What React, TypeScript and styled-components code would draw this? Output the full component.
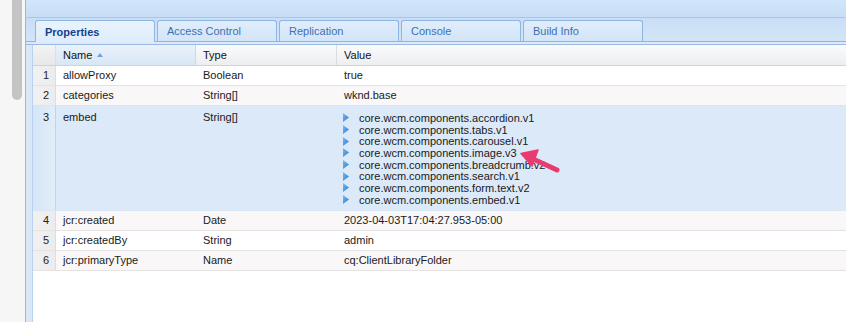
import React from "react";
import styled, { createGlobalStyle } from "styled-components";

const GlobalStyle = createGlobalStyle`
  html, body { margin: 0; padding: 0; background: #ffffff; overflow: hidden; }
  body { font-family: "Liberation Sans", Arial, sans-serif; font-size: 11px; color: #111; }
`;

const Page = styled.div`
  position: relative;
  display: flex;
  width: 846px;
  height: 322px;
  overflow: hidden;
`;

const Gutter = styled.div`
  width: 25px;
  flex: none;
  background: #f6f6f6;
  padding-left: 12px;
  box-sizing: border-box;
`;

const Thumb = styled.div`
  width: 10px;
  height: 100px;
  background: #c4c4c4;
  border-radius: 0 0 5px 5px;
`;

const Panel = styled.div`
  flex: 1;
  display: flex;
  flex-direction: column;
  border-left: 1px solid #95b8e4;
  min-width: 0;
`;

const TopBand = styled.div`
  height: 17px;
  flex: none;
  background: linear-gradient(#d2e6fa, #c6ddf5);
  border-bottom: 1px solid #a6c8ec;
`;

const TabStrip = styled.div`
  height: 23px;
  flex: none;
  display: flex;
  align-items: flex-end;
  gap: 2px;
  padding-left: 9px;
  background: linear-gradient(#c9def6, #d3e4f7);
  border-bottom: 1px solid #8db4e2;
`;

const Tab = styled.div<{ $active?: boolean }>`
  width: 120px;
  box-sizing: border-box;
  border: 1px solid #8fb5e2;
  border-bottom: none;
  border-radius: 3px 3px 0 0;
  padding-left: 9px;
  display: flex;
  align-items: center;
  font-size: 11px;
  background: ${(p) =>
    p.$active
      ? "linear-gradient(#e9f3fd, #deecfc)"
      : "linear-gradient(#e0edfc, #d3e5f8)"};
  color: ${(p) => (p.$active ? "#15428b" : "#3f6fae")};
  font-weight: ${(p) => (p.$active ? 700 : 400)};
  margin-bottom: ${(p) => (p.$active ? "-1px" : "0")};
  height: ${(p) => (p.$active ? "22px" : "21px")};
`;

const TabGap = styled.div`
  height: 2px;
  flex: none;
  background: #dde9f8;
  border-bottom: 1px solid #98bbe6;
`;

const Body = styled.div`
  flex: 1;
  display: flex;
  min-height: 0;
`;

const SideStrip = styled.div`
  width: 6px;
  flex: none;
  background: #d9e7f7;
  border-right: 1px solid #b9d1ee;
`;

const Grid = styled.div`
  flex: 1;
  background: #ffffff;
  min-width: 0;
`;

const cols = "23px 140px 141px 1fr";

const HeaderRow = styled.div`
  display: grid;
  grid-template-columns: ${cols};
  height: 20px;
  border-bottom: 1px solid #d9d0d0;
  background: linear-gradient(#fbfbfc, #eceef0);
`;

const HeadCell = styled.div<{ $sorted?: boolean; $num?: boolean }>`
  display: flex;
  align-items: center;
  padding-left: 7px;
  font-size: 11px;
  color: #111;
  border-right: 1px solid ${(p) => (p.$num ? "#dedede" : p.$sorted ? "#c9d8ea" : "#dcdcdc")};
  background: ${(p) =>
    p.$num
      ? "linear-gradient(#f3f3f3, #e8e8e8)"
      : p.$sorted
      ? "linear-gradient(#eaf2fb, #d8e7f6)"
      : "transparent"};
  &:last-child { border-right: none; }
`;

const SortArrow = styled.span`
  margin-left: 5px;
  width: 0;
  height: 0;
  border-left: 3.5px solid transparent;
  border-right: 3.5px solid transparent;
  border-bottom: 4px solid #6aa6dc;
`;

const Row = styled.div<{ $alt?: boolean; $selected?: boolean; $tall?: boolean }>`
  display: grid;
  grid-template-columns: ${cols};
  height: ${(p) => (p.$tall ? "104px" : "19px")};
  border-bottom: 1px solid ${(p) => (p.$selected ? "#d8e6f6" : "#e6e2e2")};
  background: ${(p) => (p.$selected ? "#dbe9f8" : p.$alt ? "#f9f7f7" : "#ffffff")};
`;

const NumCell = styled.div<{ $selected?: boolean; $tall?: boolean }>`
  text-align: right;
  padding-right: 6px;
  line-height: ${(p) => (p.$tall ? "13px" : "19px")};
  padding-top: ${(p) => (p.$tall ? "5px" : "0")};
  color: #222;
  font-size: 11px;
  background: ${(p) =>
    p.$selected
      ? "linear-gradient(90deg, #d6e6f7, #e1edf9)"
      : "linear-gradient(90deg, #f1f1f1, #ececec)"};
  border-right: 1px solid ${(p) => (p.$selected ? "#bcd4ee" : "#dddddd")};
`;

const Cell = styled.div<{ $tall?: boolean }>`
  padding-left: 7px;
  line-height: ${(p) => (p.$tall ? "13px" : "19px")};
  padding-top: ${(p) => (p.$tall ? "5px" : "0")};
  white-space: nowrap;
  overflow: hidden;
  color: #1a1a1a;
  font-size: 11px;
`;

const ValueList = styled.div`
  padding-left: 6px;
  padding-top: 6px;
  display: flex;
  flex-direction: column;
`;

const ValueItem = styled.div`
  display: flex;
  align-items: center;
  height: 11.7px;
  font-size: 11px;
  color: #1a1a1a;
  white-space: nowrap;
`;

const Arrow = styled.svg`
  width: 6px;
  height: 9px;
  margin-right: 10px;
  flex: none;
`;

const Overlay = styled.svg`
  position: absolute;
  left: 510px;
  top: 140px;
  width: 60px;
  height: 40px;
  pointer-events: none;
`;

const Expander = () => (
  <Arrow viewBox="0 0 6 9">
    <defs>
      <linearGradient id="tg" x1="0" y1="0" x2="1" y2="1">
        <stop offset="0" stopColor="#7cbdf0" />
        <stop offset="1" stopColor="#1f7ad0" />
      </linearGradient>
    </defs>
    <path d="M0 0 L6 4.5 L0 9 Z" fill="url(#tg)" />
  </Arrow>
);

const rows = [
  { name: "allowProxy", type: "Boolean", value: "true" },
  { name: "categories", type: "String[]", value: "wknd.base" },
  {
    name: "embed",
    type: "String[]",
    list: [
      "core.wcm.components.accordion.v1",
      "core.wcm.components.tabs.v1",
      "core.wcm.components.carousel.v1",
      "core.wcm.components.image.v3",
      "core.wcm.components.breadcrumb.v2",
      "core.wcm.components.search.v1",
      "core.wcm.components.form.text.v2",
      "core.wcm.components.embed.v1",
    ],
  },
  { name: "jcr:created", type: "Date", value: "2023-04-03T17:04:27.953-05:00" },
  { name: "jcr:createdBy", type: "String", value: "admin" },
  { name: "jcr:primaryType", type: "Name", value: "cq:ClientLibraryFolder" },
];

const tabs = ["Properties", "Access Control", "Replication", "Console", "Build Info"];

export default function App() {
  return (
    <>
      <GlobalStyle />
      <Page>
        <Gutter>
          <Thumb />
        </Gutter>
        <Panel>
          <TopBand />
          <TabStrip>
            {tabs.map((t, i) => (
              <Tab key={t} $active={i === 0}>
                {t}
              </Tab>
            ))}
          </TabStrip>
          <TabGap />
          <Body>
            <SideStrip />
            <Grid>
              <HeaderRow>
                <HeadCell $num />
                <HeadCell $sorted>
                  Name<SortArrow />
                </HeadCell>
                <HeadCell>Type</HeadCell>
                <HeadCell>Value</HeadCell>
              </HeaderRow>
              {rows.map((r, i) => {
                const tall = !!r.list;
                const selected = i === 2;
                return (
                  <Row key={r.name} $alt={i % 2 === 1} $selected={selected} $tall={tall}>
                    <NumCell $selected={selected} $tall={tall}>
                      {i + 1}
                    </NumCell>
                    <Cell $tall={tall}>{r.name}</Cell>
                    <Cell $tall={tall}>{r.type}</Cell>
                    {r.list ? (
                      <ValueList>
                        {r.list.map((v) => (
                          <ValueItem key={v}>
                            <Expander />
                            {v}
                          </ValueItem>
                        ))}
                      </ValueList>
                    ) : (
                      <Cell>{r.value}</Cell>
                    )}
                  </Row>
                );
              })}
            </Grid>
          </Body>
        </Panel>
        <Overlay viewBox="0 0 60 40">
          <path d="M47 30 L22 18.5" stroke="#ea3b70" strokeWidth="5" strokeLinecap="round" />
          <path d="M11 13.5 L28 10 L22 26 Z" fill="#ea3b70" stroke="#ea3b70" strokeWidth="1.5" strokeLinejoin="round" />
        </Overlay>
      </Page>
    </>
  );
}
